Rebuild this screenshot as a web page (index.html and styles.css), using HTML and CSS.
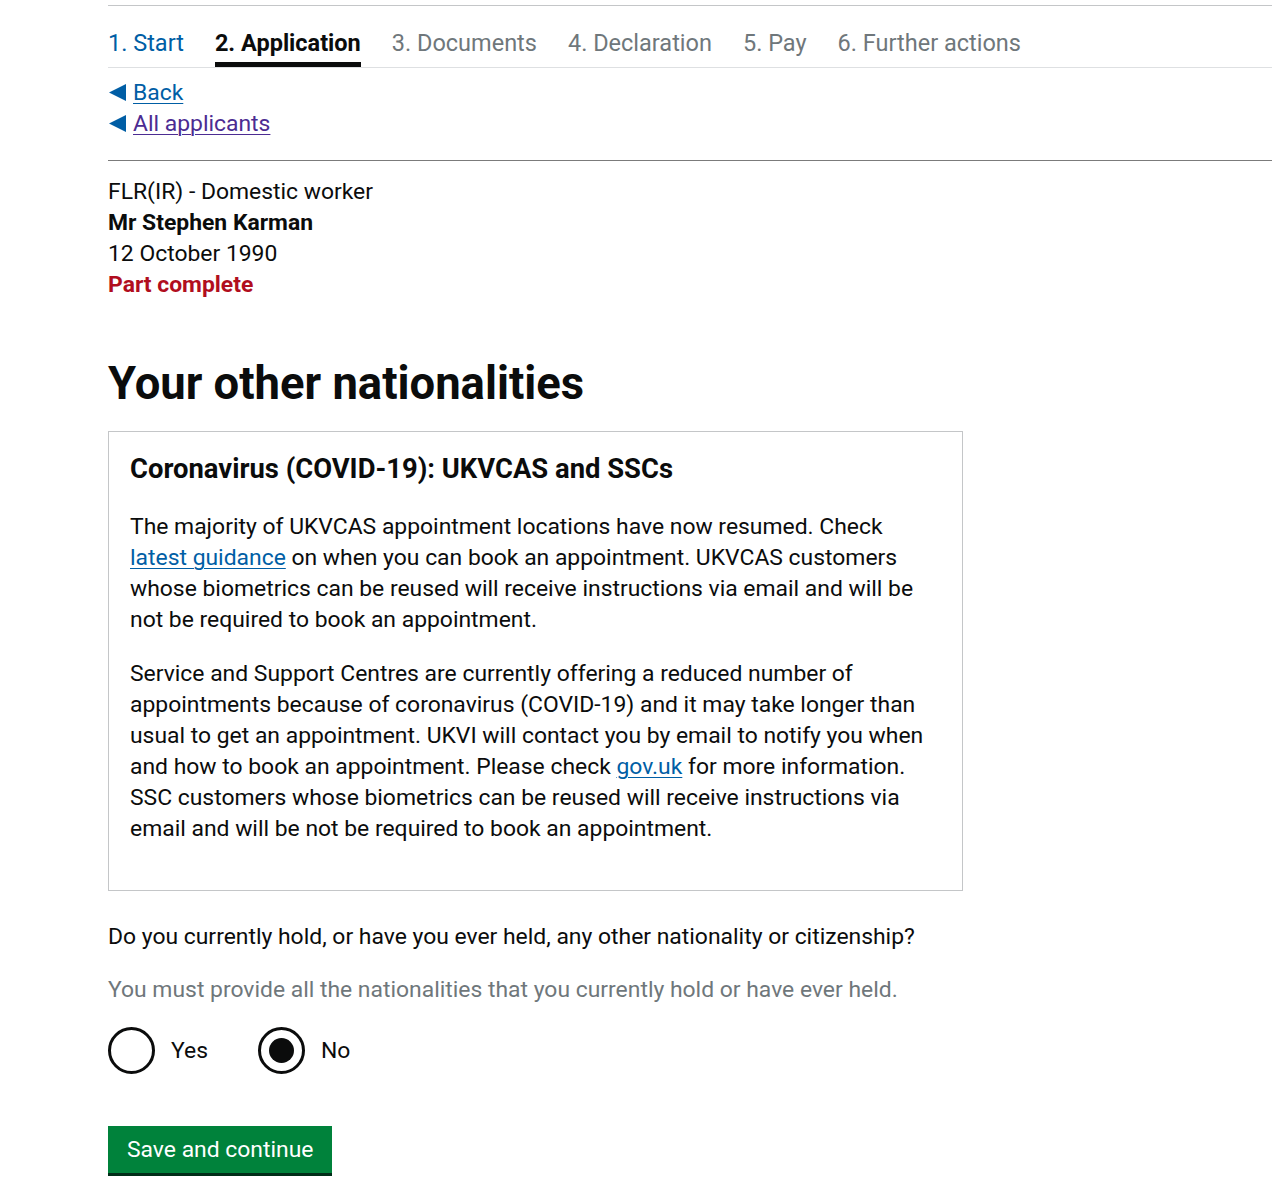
FILE: index.html
```html
<!DOCTYPE html>
<html lang="en">
<head>
<meta charset="utf-8">
<title>Your other nationalities</title>
<link rel="stylesheet" href="styles.css">
</head>
<body>
<div class="page">
  <nav class="steps">
    <a class="step step-done" href="#">1. Start</a>
    <span class="step step-active">2. Application</span>
    <span class="step">3. Documents</span>
    <span class="step">4. Declaration</span>
    <span class="step">5. Pay</span>
    <span class="step">6. Further actions</span>
  </nav>

  <div class="back-links">
    <a class="back-link" href="#"><svg class="arrow" width="17" height="17" viewBox="0 0 17 17"><polygon points="0,8.5 17,0 17,17" fill="#005ea5"/></svg><span class="back-text">Back</span></a>
    <a class="back-link visited" href="#"><svg class="arrow" width="17" height="17" viewBox="0 0 17 17"><polygon points="0,8.5 17,0 17,17" fill="#005ea5"/></svg><span class="back-text">All applicants</span></a>
  </div>

  <hr class="divider">

  <div class="summary">
    <div>FLR(IR) - Domestic worker</div>
    <div class="bold">Mr Stephen Karman</div>
    <div>12 October 1990</div>
    <div class="status">Part complete</div>
  </div>

  <h1 class="title">Your other nationalities</h1>

  <div class="panel">
    <h2 class="panel-title">Coronavirus (COVID-19): UKVCAS and SSCs</h2>
    <p class="body">The majority of UKVCAS appointment locations have now resumed. Check <a href="#" class="link">latest guidance</a> on when you can book an appointment. UKVCAS customers whose biometrics can be reused will receive instructions via email and will be not be required to book an appointment.</p>
    <p class="body">Service and Support Centres are currently offering a reduced number of appointments because of coronavirus (COVID-19) and it may take longer than usual to get an appointment. UKVI will contact you by email to notify you when and how to book an appointment. Please check <a href="#" class="link">gov.uk</a> for more information. SSC customers whose biometrics can be reused will receive instructions via email and will be not be required to book an appointment.</p>
  </div>

  <fieldset class="question">
    <legend class="question-text">Do you currently hold, or have you ever held, any other nationality or citizenship?</legend>
    <div class="hint">You must provide all the nationalities that you currently hold or have ever held.</div>
    <div class="radios">
      <label class="radio"><span class="circle"></span><span class="radio-label">Yes</span></label>
      <label class="radio"><span class="circle checked"></span><span class="radio-label">No</span></label>
    </div>
  </fieldset>

  <button class="button" type="button">Save and continue</button>
</div>
</body>
</html>
```
FILE: styles.css
```css
html, body {
  margin: 0;
  padding: 0;
  background: #ffffff;
}
body {
  font-family: Roboto, "Liberation Sans", sans-serif;
  font-size: 22.9px;
  line-height: 31px;
  color: #0b0c0c;
}
.page {
  margin: 5px 0 0 108px;
  border-top: 1px solid #c4c6c8;
  padding-bottom: 40px;
}

/* step navigation */
.steps {
  display: flex;
  gap: 31px;
  border-bottom: 1px solid #dee0e2;
}
.step {
  padding-top: 22px;
  padding-bottom: 3px;
  border-bottom: 5px solid transparent;
  font-size: 23.5px;
  color: #6f777b;
  text-decoration: none;
  white-space: nowrap;
}
.step-done {
  color: #005ea5;
}
.step-active {
  color: #0b0c0c;
  font-weight: 700;
  border-bottom-color: #0b0c0c;
}

/* back links */
.back-links {
  display: flex;
  flex-direction: column;
  align-items: flex-start;
  margin-top: 9px;
}
.back-link {
  display: flex;
  align-items: center;
  gap: 7px;
  color: #005ea5;
  text-decoration: none;
}
.back-link .arrow {
  flex: none;
  margin-left: 1px;
}
.back-text {
  text-decoration: underline;
  text-decoration-thickness: 1px;
  text-underline-offset: 3px;
}
.back-link.visited {
  color: #4c2c92;
}

.divider {
  margin: 21px 0 0 0;
  border: 0;
  border-top: 1px solid #7b7b7b;
  height: 0;
}

.summary {
  margin-top: 15px;
}
.bold {
  font-weight: 700;
}
.status {
  font-weight: 700;
  color: #b10e1e;
}

.title {
  margin: 59px 0 0 0;
  font-size: 45.4px;
  line-height: 50px;
  font-weight: 700;
}

.panel {
  box-sizing: border-box;
  width: 855px;
  margin-top: 22px;
  border: 1px solid #c4c6c8;
  padding: 19px 21px 23px 21px;
}
.panel-title {
  margin: 0;
  font-size: 27.4px;
  line-height: 37.5px;
  font-weight: 700;
}
.body {
  margin: 0;
}
.panel-title + .body {
  margin-top: 22px;
}
.body + .body {
  margin-top: 23px;
}
.panel .body:last-child {
  margin-bottom: 23px;
}
.link {
  color: #005ea5;
  text-decoration: underline;
  text-decoration-thickness: 1px;
  text-underline-offset: 3px;
}

.question {
  margin: 30px 0 0 0;
  padding: 0;
  border: 0;
  min-width: 0;
}
.question-text {
  padding: 0;
}
.hint {
  margin-top: 22px;
  color: #6f777b;
}
.radios {
  display: flex;
  gap: 50px;
  margin-top: 22px;
}
.radio {
  display: flex;
  align-items: center;
  gap: 16px;
}
.circle {
  box-sizing: border-box;
  width: 47px;
  height: 47px;
  border: 3px solid #0b0c0c;
  border-radius: 50%;
  display: flex;
  align-items: center;
  justify-content: center;
  background: #ffffff;
}
.circle.checked::after {
  content: "";
  width: 25px;
  height: 25px;
  border-radius: 50%;
  background: #0b0c0c;
}

.button {
  display: block;
  margin-top: 52px;
  padding: 8px 19px;
  border: 0;
  border-radius: 0;
  background: #00823b;
  box-shadow: 0 3px 0 #002d18;
  color: #ffffff;
  font-family: inherit;
  font-size: 22.9px;
  line-height: 31px;
  cursor: pointer;
}
```
